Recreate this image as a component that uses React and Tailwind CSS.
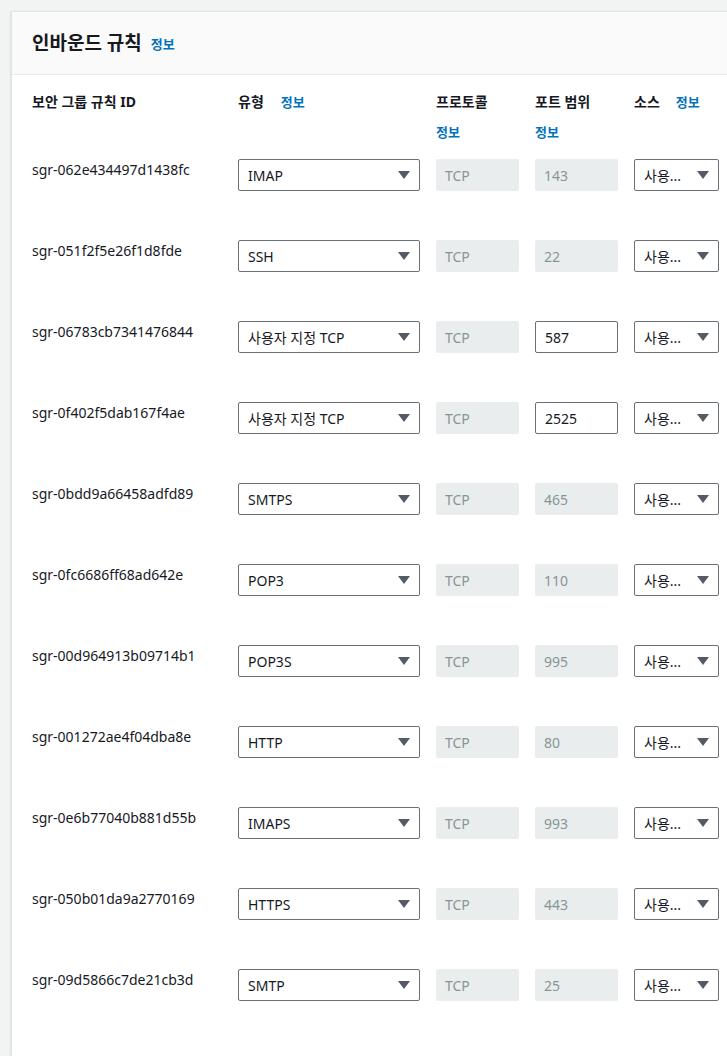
import React from "react";

const rules = [
  { id: "sgr-062e434497d1438fc", type: "IMAP", port: "143" },
  { id: "sgr-051f2f5e26f1d8fde", type: "SSH", port: "22" },
  { id: "sgr-06783cb7341476844", type: "사용자 지정 TCP", port: "587", editable: true },
  { id: "sgr-0f402f5dab167f4ae", type: "사용자 지정 TCP", port: "2525", editable: true },
  { id: "sgr-0bdd9a66458adfd89", type: "SMTPS", port: "465" },
  { id: "sgr-0fc6686ff68ad642e", type: "POP3", port: "110" },
  { id: "sgr-00d964913b09714b1", type: "POP3S", port: "995" },
  { id: "sgr-001272ae4f04dba8e", type: "HTTP", port: "80" },
  { id: "sgr-0e6b77040b881d55b", type: "IMAPS", port: "993" },
  { id: "sgr-050b01da9a2770169", type: "HTTPS", port: "443" },
  { id: "sgr-09d5866c7de21cb3d", type: "SMTP", port: "25" },
];

const Caret = () => (
  <svg width="12" height="8" viewBox="0 0 12 8" className="shrink-0">
    <path d="M0 0 H12 L6 8 Z" fill="#545b64" />
  </svg>
);

const Info = ({ className = "" }) => (
  <span className={"text-[13px] font-bold text-[#0073bb] " + className}>정보</span>
);

const Select = ({ value }) => (
  <div className="h-8 flex items-center justify-between border border-[#687078] rounded-[2px] bg-white px-[9px]">
    <span className="truncate text-[14px] text-[#16191f]">{value}</span>
    <Caret />
  </div>
);

const Field = ({ value, disabled }) =>
  disabled ? (
    <div className="h-8 flex items-center rounded-[2px] bg-[#eaeded] px-[9px] text-[14px] text-[#879596]">
      {value}
    </div>
  ) : (
    <div className="h-8 flex items-center border border-[#687078] rounded-[2px] bg-white px-[9px] text-[14px] text-[#16191f]">
      {value}
    </div>
  );

export default function App() {
  return (
    <div
      className="w-[727px] h-[1056px] overflow-hidden bg-[#f2f3f3] pt-[11px] pl-[11px]"
      style={{ fontFamily: '"Noto Sans", "Noto Sans CJK KR", sans-serif' }}
    >
      <div className="h-full bg-white border-l border-t border-[#e1e4e4] shadow-[0_1px_2px_rgba(0,28,36,0.2)]">
        <div className="h-[63px] bg-[#fafafa] border-b border-[#e7eaea] flex items-center pl-5 gap-[9px]">
          <h2 className="text-[19px] font-bold text-[#16191f]">인바운드 규칙</h2>
          <Info className="mt-[3px]" />
        </div>

        <div className="pl-5 pt-[17px]">
          <div className="grid grid-cols-[190px_182px_83px_83px_85px] gap-x-4 text-[14px] font-bold text-[#16191f] h-[67px]">
            <div className="leading-5">보안 그룹 규칙 ID</div>
            <div className="leading-5 flex gap-[17px]">
              <span>유형</span>
              <Info />
            </div>
            <div className="flex flex-col gap-[10px] leading-5">
              <span>프로토콜</span>
              <Info />
            </div>
            <div className="flex flex-col gap-[10px] leading-5">
              <span>포트 범위</span>
              <Info />
            </div>
            <div className="leading-5 flex gap-4">
              <span>소스</span>
              <Info />
            </div>
          </div>

          {rules.map((r) => (
            <div
              key={r.id}
              className="grid grid-cols-[190px_182px_83px_83px_85px] gap-x-4 items-start h-[81px]"
            >
              <div className="text-[14px] leading-5 text-[#16191f] mt-[1px]">{r.id}</div>
              <Select value={r.type} />
              <Field value="TCP" disabled />
              <Field value={r.port} disabled={!r.editable} />
              <Select value="사용..." />
            </div>
          ))}
        </div>
      </div>
    </div>
  );
}
